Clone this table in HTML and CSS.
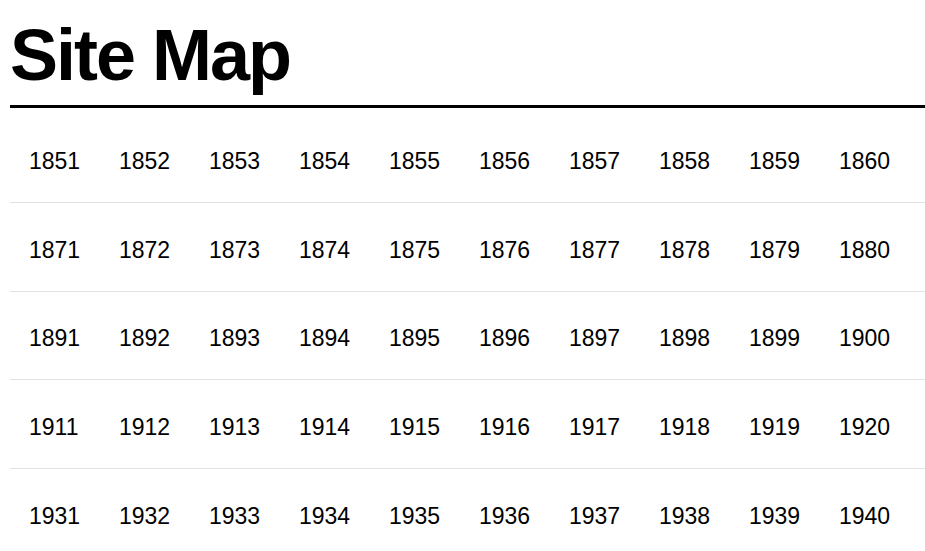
FILE: index.html
```html
<!DOCTYPE html>
<html lang="en">
<head>
    <meta charset="UTF-8">
    <meta name="viewport" content="width=device-width, initial-scale=1.0">
    <title>Site Map</title>
    <link rel="stylesheet" href="styles.css">
</head>
<body>
    <div class="page">
        <h1 class="title">Site Map</h1>
        <div class="years">
            <ul class="year-row">
                <li><a href="#">1851</a></li>
                <li><a href="#">1852</a></li>
                <li><a href="#">1853</a></li>
                <li><a href="#">1854</a></li>
                <li><a href="#">1855</a></li>
                <li><a href="#">1856</a></li>
                <li><a href="#">1857</a></li>
                <li><a href="#">1858</a></li>
                <li><a href="#">1859</a></li>
                <li><a href="#">1860</a></li>
            </ul>
            <ul class="year-row">
                <li><a href="#">1871</a></li>
                <li><a href="#">1872</a></li>
                <li><a href="#">1873</a></li>
                <li><a href="#">1874</a></li>
                <li><a href="#">1875</a></li>
                <li><a href="#">1876</a></li>
                <li><a href="#">1877</a></li>
                <li><a href="#">1878</a></li>
                <li><a href="#">1879</a></li>
                <li><a href="#">1880</a></li>
            </ul>
            <ul class="year-row">
                <li><a href="#">1891</a></li>
                <li><a href="#">1892</a></li>
                <li><a href="#">1893</a></li>
                <li><a href="#">1894</a></li>
                <li><a href="#">1895</a></li>
                <li><a href="#">1896</a></li>
                <li><a href="#">1897</a></li>
                <li><a href="#">1898</a></li>
                <li><a href="#">1899</a></li>
                <li><a href="#">1900</a></li>
            </ul>
            <ul class="year-row">
                <li><a href="#">1911</a></li>
                <li><a href="#">1912</a></li>
                <li><a href="#">1913</a></li>
                <li><a href="#">1914</a></li>
                <li><a href="#">1915</a></li>
                <li><a href="#">1916</a></li>
                <li><a href="#">1917</a></li>
                <li><a href="#">1918</a></li>
                <li><a href="#">1919</a></li>
                <li><a href="#">1920</a></li>
            </ul>
            <ul class="year-row">
                <li><a href="#">1931</a></li>
                <li><a href="#">1932</a></li>
                <li><a href="#">1933</a></li>
                <li><a href="#">1934</a></li>
                <li><a href="#">1935</a></li>
                <li><a href="#">1936</a></li>
                <li><a href="#">1937</a></li>
                <li><a href="#">1938</a></li>
                <li><a href="#">1939</a></li>
                <li><a href="#">1940</a></li>
            </ul>
        </div>
    </div>
</body>
</html>
```

FILE: styles.css
```css
* {
    box-sizing: border-box;
}

body {
    margin: 0;
    padding: 0;
    font-family: "Liberation Sans", Arial, sans-serif;
    background-color: #fff;
    color: #000;
}

.page {
    padding: 19px 0 0 10px;
}

.title {
    margin: 0;
    padding-bottom: 14px;
    font-size: 72px;
    line-height: 72px;
    font-weight: 700;
    letter-spacing: -2px;
    border-bottom: 3px solid #000;
}

.years {
    margin-top: 6px;
}

.year-row {
    list-style: none;
    margin: 0;
    padding: 33.75px 0 28px 19px;
    display: grid;
    grid-template-columns: repeat(10, 90px);
    border-bottom: 1px solid #e2e2e2;
}

.year-row li {
    font-size: 23px;
    line-height: 26px;
}

.year-row a {
    color: #000;
    text-decoration: none;
}
```
